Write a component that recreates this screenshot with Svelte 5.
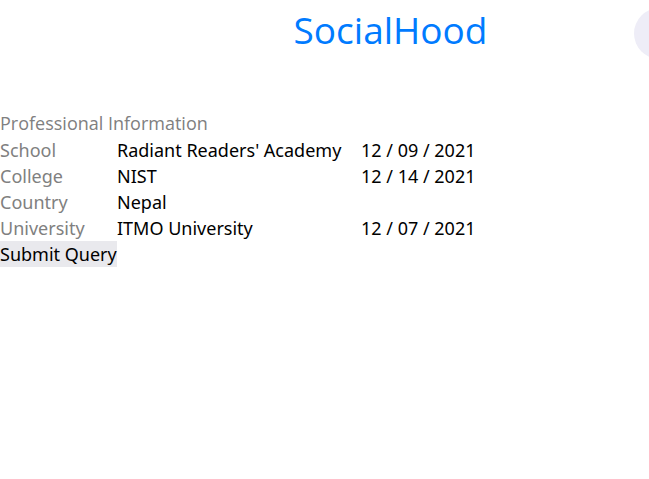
<script>
  let rows = $state([
    { id: 'school', label: 'School', value: "Radiant Readers' Academy", date: '12 / 09 / 2021' },
    { id: 'college', label: 'College', value: 'NIST', date: '12 / 14 / 2021' },
    { id: 'country', label: 'Country', value: 'Nepal' },
    { id: 'university', label: 'University', value: 'ITMO University', date: '12 / 07 / 2021' }
  ]);
</script>

<header>
  <h1>SocialHood</h1>
  <button class="avatar" type="button" aria-label="Account"></button>
</header>

<form onsubmit={(e) => e.preventDefault()}>
  <h2>Professional Information</h2>
  <div class="fields">
    {#each rows as row (row.id)}
      <label for={row.id}>{row.label}</label>
      <input id={row.id} type="text" bind:value={row.value} />
      {#if row.date}
        <input type="text" aria-label="{row.label} date" bind:value={row.date} />
      {:else}
        <span></span>
      {/if}
    {/each}
  </div>
  <button class="submit" type="submit">Submit Query</button>
</form>

<style>
  :global(body) {
    background: #fff;
    font-family: "Noto Sans", "Open Sans", sans-serif;
    font-size: 18px;
    line-height: 26px;
  }
  header {
    position: relative;
    height: 110px;
    overflow: hidden;
  }
  h1 {
    margin: 0;
    padding: 4px 0 0 132px;
    text-align: center;
    font-family: "Open Sans", "Noto Sans", sans-serif;
    font-size: 37px;
    line-height: 52px;
    font-weight: 400;
    color: #007bff;
  }
  .avatar {
    position: absolute;
    top: 8px;
    right: -36px;
    width: 51px;
    height: 51px;
    padding: 0;
    border: 0;
    border-radius: 50%;
    background: #eeedf7;
  }
  h2 {
    margin: 0;
    font: inherit;
    font-family: "Open Sans", "Noto Sans", sans-serif;
    color: gray;
    padding-bottom: 1px;
  }
  .fields {
    display: grid;
    grid-template-columns: 117px 244px 1fr;
  }
  label {
    color: gray;
  }
  input {
    min-width: 0;
    height: 26px;
    padding: 0;
    border: 0;
    outline: 0;
    background: transparent;
    font: inherit;
    color: #000;
  }
  .submit {
    display: block;
    padding: 0;
    border: 0;
    background: #e9e9ed;
    font: inherit;
    color: #000;
  }
</style>
